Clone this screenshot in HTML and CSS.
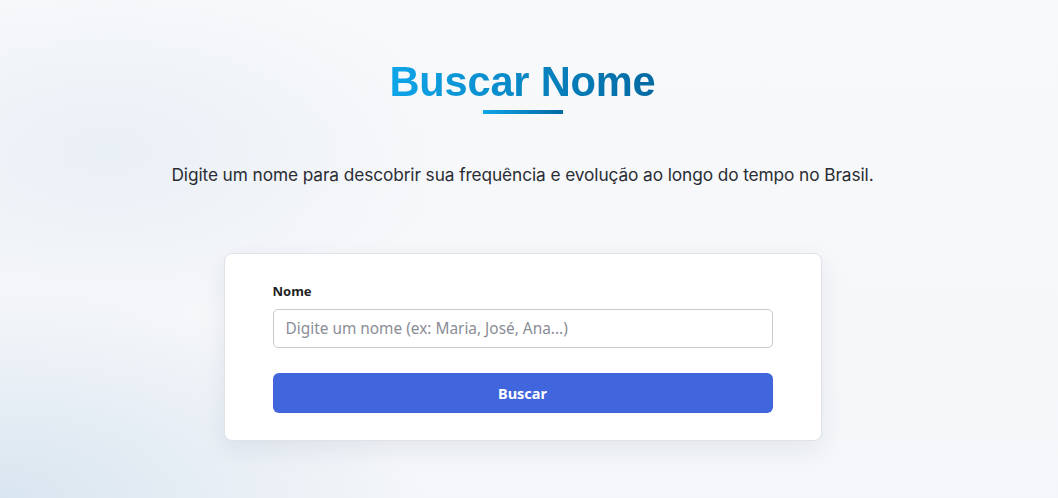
FILE: index.html
```html
<!DOCTYPE html>
<html lang="pt-BR">
<head>
<meta charset="utf-8">
<title>Buscar Nome</title>
<link rel="stylesheet" href="styles.css">
</head>
<body>
<main class="page">
  <header class="hero">
    <h1 class="title">Buscar Nome</h1>
    <div class="title-bar"></div>
    <p class="lead">Digite um nome para descobrir sua frequência e evolução ao longo do tempo no Brasil.</p>
  </header>
  <form class="card">
    <label class="label" for="nome">Nome</label>
    <input class="input" id="nome" type="text" placeholder="Digite um nome (ex: Maria, José, Ana...)">
    <button class="btn" type="button">Buscar</button>
  </form>
</main>
</body>
</html>
```
FILE: styles.css
```css
html, body {
  margin: 0;
  height: 100%;
}
body {
  font-family: "Inter", "Noto Sans", sans-serif;
  background:
    radial-gradient(ellipse 600px 300px at 0% 100%, rgba(205, 222, 236, 0.7), rgba(205, 222, 236, 0) 70%),
    radial-gradient(ellipse 500px 260px at 10% 30%, rgba(225, 234, 243, 0.6), rgba(225, 234, 243, 0) 70%),
    linear-gradient(180deg, #f8f9fb 0%, #f4f6f9 100%);
  color: #222;
}
.page {
  display: flex;
  flex-direction: column;
  align-items: center;
  padding-top: 56px;
  padding-right: 13px;
}
.hero {
  display: flex;
  flex-direction: column;
  align-items: center;
}
.title {
  margin: 0;
  font-family: "Liberation Sans", Arial, sans-serif;
  font-weight: 700;
  font-size: 41.6px;
  line-height: 52px;
  letter-spacing: -0.2px;
  background: linear-gradient(90deg, #0ea5e9 0%, #0369a1 100%);
  -webkit-background-clip: text;
  background-clip: text;
  color: transparent;
}
.title-bar {
  width: 80px;
  height: 4px;
  margin-top: 2px;
  background: linear-gradient(90deg, #0ea5e9, #0369a1);
}
.lead {
  margin: 47px 0 0;
  font-size: 17.3px;
  line-height: 28px;
  color: #2a2d33;
  letter-spacing: -0.1px;
}
.card {
  margin-top: 64px;
  width: 500px;
  padding: 28px 48px 27px;
  background: #fff;
  border: 1px solid #e0e2e7;
  border-radius: 8px;
  box-shadow: 0 8px 24px rgba(30, 50, 80, 0.08);
  display: flex;
  flex-direction: column;
  font-family: "Noto Sans", "Open Sans", sans-serif;
}
.label {
  font-size: 13px;
  font-weight: 700;
  color: #1f1f24;
  line-height: 18px;
  margin-bottom: 9px;
}
.input {
  box-sizing: border-box;
  height: 39px;
  padding: 0 12px;
  border: 1px solid #c9cbd2;
  border-radius: 5px;
  font-family: inherit;
  font-size: 15.4px;
  color: #333;
  outline: none;
}
.input::placeholder {
  color: #8a8d96;
}
.btn {
  margin-top: 25px;
  height: 40px;
  border: none;
  border-radius: 6px;
  background: #4065dd;
  color: #fff;
  font-family: inherit;
  font-weight: 700;
  font-size: 14.5px;
  cursor: pointer;
}
```
